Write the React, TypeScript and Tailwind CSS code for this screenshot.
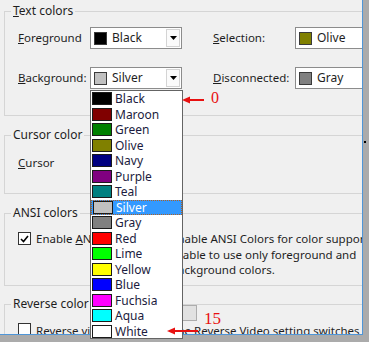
import React from 'react';

const COLORS: [string, string][] = [
  ['Black', 'bg-[#000000]'],
  ['Maroon', 'bg-[#800000]'],
  ['Green', 'bg-[#008000]'],
  ['Olive', 'bg-[#808000]'],
  ['Navy', 'bg-[#000080]'],
  ['Purple', 'bg-[#800080]'],
  ['Teal', 'bg-[#008080]'],
  ['Silver', 'bg-[#c0c0c0]'],
  ['Gray', 'bg-[#808080]'],
  ['Red', 'bg-[#ff0000]'],
  ['Lime', 'bg-[#00ff00]'],
  ['Yellow', 'bg-[#ffff00]'],
  ['Blue', 'bg-[#0000ff]'],
  ['Fuchsia', 'bg-[#ff00ff]'],
  ['Aqua', 'bg-[#00ffff]'],
  ['White', 'bg-[#ffffff]'],
];

const Group: React.FC<{ title: React.ReactNode; className: string; children?: React.ReactNode }> = ({ title, className, children }) => (
  <div className={`relative ml-[4px] border border-r-0 border-[#d5d5d5] ${className}`}>
    <span className="absolute left-[6px] top-[-9px] bg-[#f0f0f0] px-[2px] text-[12px] leading-[16px]">{title}</span>
    {children}
  </div>
);

const Combo: React.FC<{ name: string; swatch: string; arrow?: boolean }> = ({ name, swatch, arrow = true }) => (
  <div className="flex h-[22px] w-[92px] items-center border border-[#8c8c8c] bg-white">
    <span className={`ml-[3px] h-[13px] w-[13px] shrink-0 border border-[#3a3a3a] ${swatch}`} />
    <span className="ml-[5px] flex-1 whitespace-nowrap text-[12px]">{name}</span>
    {arrow && (
      <span className="mr-[1px] flex h-[18px] w-[14px] items-center justify-center border border-[#d4d4d4] bg-[#fbfbfb]">
        <svg width="7" height="4" viewBox="0 0 7 4">
          <path d="M0 0h7L3.5 4z" fill="#000" />
        </svg>
      </span>
    )}
  </div>
);

const Check: React.FC<{ checked?: boolean }> = ({ checked }) => (
  <span className="flex h-[13px] w-[13px] shrink-0 items-center justify-center border border-[#333] bg-white">
    {checked && (
      <svg width="9" height="8" viewBox="0 0 9 8">
        <path d="M1 4l2.5 2.5L8 1" stroke="#000" strokeWidth="1.6" fill="none" />
      </svg>
    )}
  </span>
);

const Arrow: React.FC<{ className: string; length: number }> = ({ className, length }) => (
  <svg className={`absolute ${className}`} width={length} height="8" viewBox={`0 0 ${length} 8`}>
    <path d="M0 4L8 0.5V7.5Z" fill="#e81010" />
    <rect x="6" y="3" width={length - 6} height="2" fill="#e81010" />
  </svg>
);

export default function App() {
  return (
    <div className="relative h-[342px] w-[369px] overflow-hidden bg-[#ababab] text-[11.5px] text-[#1e1e1e] [font-family:'Noto_Sans',sans-serif]">
      <div className="h-[335px] w-[363px] overflow-hidden border-r border-b border-[#4f96d8] bg-[#f0f0f0]">
        <Group title={<><u>T</u>ext colors</>} className="mt-[11px] h-[105px]">
          <div className="grid grid-cols-[72px_92px_31px_82px_92px] items-center gap-y-[18px] pl-[13px] pt-[15px]">
            <span><u>F</u>oreground</span>
            <Combo name="Black" swatch="bg-[#000000]" />
            <span />
            <span><u>S</u>election:</span>
            <Combo name="Olive" swatch="bg-[#808000]" />
            <span><u>B</u>ackground:</span>
            <Combo name="Silver" swatch="bg-[#c0c0c0]" />
            <span />
            <span><u>D</u>isconnected:</span>
            <Combo name="Gray" swatch="bg-[#808080]" />
          </div>
        </Group>

        <Group title="Cursor color" className="mt-[19px] h-[59px]">
          <div className="pl-[13px] pt-[19px] leading-[16px]">
            <u>C</u>ursor
          </div>
        </Group>

        <Group title="ANSI colors" className="mt-[19px] h-[73px]">
          <div className="flex pl-[13px] pt-[17px]">
            <div className="flex w-[153px] shrink-0 items-center gap-[5px] self-start leading-[15.5px]">
              <Check checked />
              <span>Enable <u>A</u>NSI Colors</span>
            </div>
            <div className="whitespace-nowrap leading-[15.5px]">
              <div>Enable ANSI Colors for color support.</div>
              <div className="ml-[-5px]">Disable to use only foreground and</div>
              <div>background colors.</div>
            </div>
          </div>
        </Group>

        <Group title="Reverse color" className="mt-[18px] h-[40px]">
          <div className="flex pl-[13px]">
            <div className="mt-[18px] flex w-[153px] shrink-0 items-start gap-[5px] leading-[15px]">
              <Check />
              <span><u>R</u>everse video</span>
            </div>
            <div className="whitespace-nowrap leading-[15px]">
              <div className="ml-[11px] h-[16px] w-[15px] border border-[#adadad] bg-[#e1e1e1]" />
              <div className="mt-[2px]">The Reverse Video setting switches the colors</div>
            </div>
          </div>
        </Group>
      </div>

      <span className="absolute left-[364px] top-[141px] h-[2px] w-[2px] bg-black" />

      <div className="absolute left-[90px] top-[90px] h-[249px] w-[93px] border border-[#646464] bg-white text-[12px] text-[#1c1c40]">
        {COLORS.map(([name, swatch]) => (
          <div
            key={name}
            className={`flex h-[15.5px] items-center ${name === 'Silver' ? 'border border-dotted border-[#b06020] bg-[#3399ff] text-white' : ''}`}
          >
            <span className={`ml-[1px] h-[13px] w-[20px] shrink-0 border border-[#1a1a1a] ${swatch}`} />
            <span className="ml-[3px] leading-[15px]">{name}</span>
          </div>
        ))}
      </div>

      <Arrow className="left-[182px] top-[96px]" length={22} />
      <span className="absolute left-[211px] top-[89px] text-[16px] leading-[18px] text-[#e81010] [font-family:'Liberation_Serif',serif]">0</span>

      <Arrow className="left-[167px] top-[327px]" length={31} />
      <span className="absolute left-[204px] top-[309px] text-[17px] leading-[20px] text-[#e81010] [font-family:'Liberation_Serif',serif]">15</span>
    </div>
  );
}
